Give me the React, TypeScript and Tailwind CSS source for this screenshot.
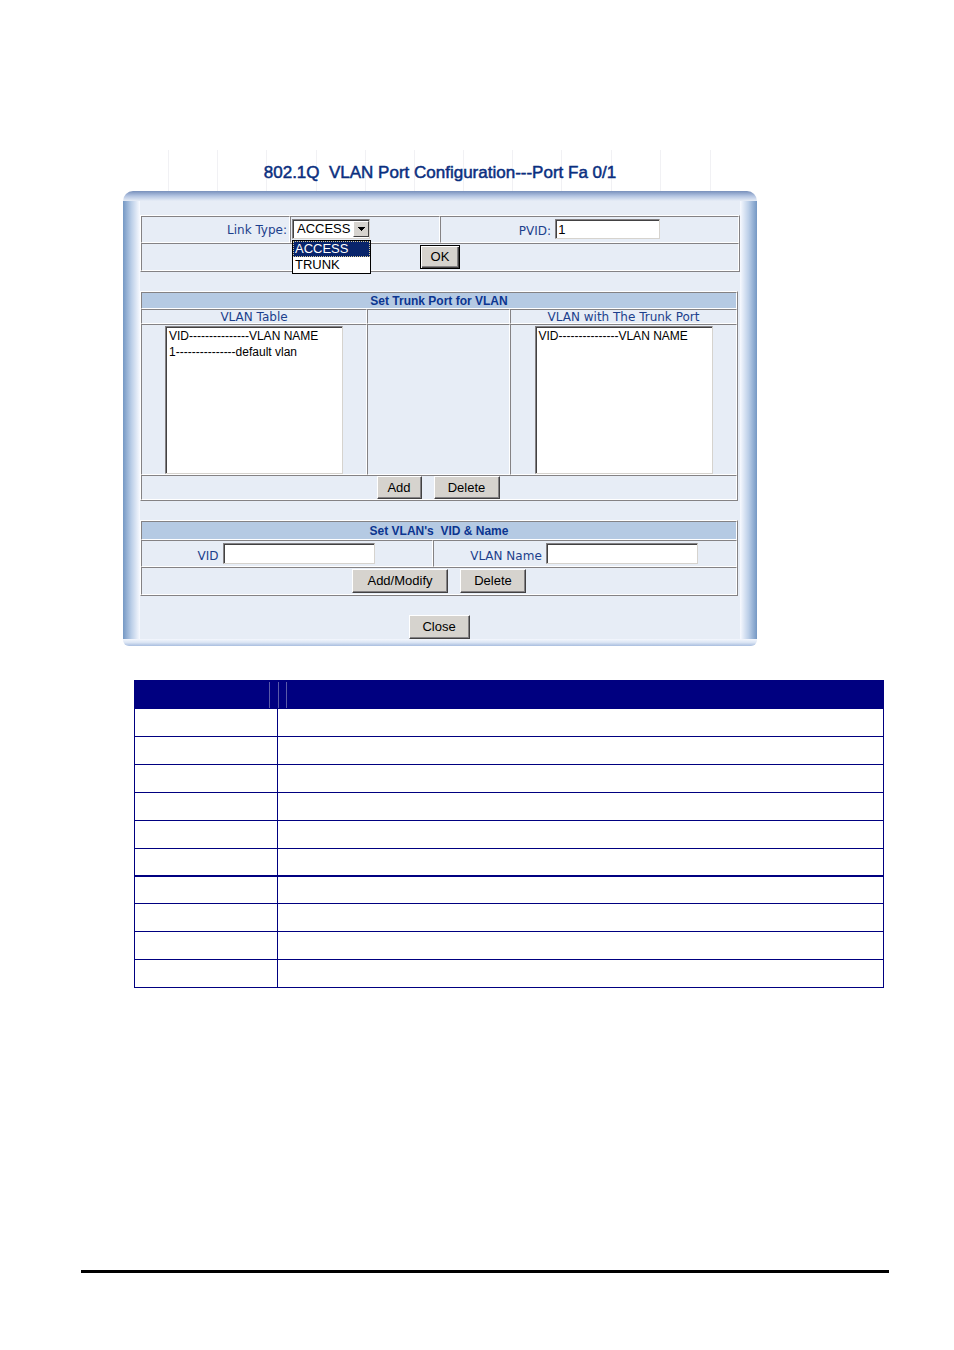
import React, { useState } from 'react';
import clsx from 'clsx';

const LINK_TYPES = ['ACCESS', 'TRUNK'];

const GUIDES = [1, 2, 3, 4, 5, 6, 7, 8, 9, 10, 11];

const FIELD_ROWS = [
  { id: 1 },
  { id: 2 },
  { id: 3 },
  { id: 4 },
  { id: 5 },
  { id: 6, divider: true },
  { id: 7 },
  { id: 8 },
  { id: 9 },
  { id: 10 },
];

const labelClass = 'font-["DejaVu_Sans",Verdana,sans-serif] text-xs text-[#1c3f8c]';

const sunkenClass =
  'border border-t-[#848284] border-l-[#848284] border-b-[#d6d3ce] border-r-[#d6d3ce] bg-white text-black shadow-[inset_1px_1px_0_#424142] outline-none';

const inputClass = 'px-0.5 text-[13px] leading-4';

interface BoxProps {
  className?: string;
  children?: React.ReactNode;
}

// Raised outer frame of an old style bordered table
const Frame: React.FC<BoxProps> = ({ className, children }) => (
  <div className={clsx('grid border border-t-white border-l-white border-b-[#848284] border-r-[#848284]', className)}>
    {children}
  </div>
);

const Cell: React.FC<BoxProps> = ({ className, children }) => (
  <div className={clsx('flex items-center border border-t-[#848284] border-l-[#848284] border-b-white border-r-white', className)}>
    {children}
  </div>
);

interface PushButtonProps {
  label: string;
  className?: string;
  isDefault?: boolean;
}

const PushButton: React.FC<PushButtonProps> = ({ label, className, isDefault }) => (
  <button
    type="button"
    className={clsx(
      'shrink-0 border bg-[#d6d3ce] text-[13px] leading-4 text-black',
      isDefault
        ? 'border-black shadow-[inset_1px_1px_0_#ffffff,inset_-1px_-1px_0_#424142,inset_-2px_-2px_0_#848284]'
        : 'border-t-white border-l-white border-b-[#424142] border-r-[#424142] shadow-[inset_-1px_-1px_0_#848284]',
      className
    )}
  >
    {label}
  </button>
);

interface VlanListProps {
  id: string;
  rows: string[];
}

const VlanList: React.FC<VlanListProps> = ({ id, rows }) => (
  <select
    id={id}
    size={9}
    className={clsx(sunkenClass, 'h-[148px] w-[178px] appearance-none overflow-hidden px-px pt-0.5 text-xs')}
  >
    {rows.map((row) => (
      <option key={row} className="h-4 px-0.5 py-0 leading-4">
        {row}
      </option>
    ))}
  </select>
);

const LinkTypeSelect: React.FC = () => {
  const [value, setValue] = useState('ACCESS');

  return (
    <div className="relative h-5 w-[78px]">
      <select
        id="link-type"
        value={value}
        onChange={(e) => setValue(e.target.value)}
        className={clsx(sunkenClass, 'block h-5 w-full appearance-none pl-1 text-[13px] leading-4')}
      >
        {LINK_TYPES.map((type) => (
          <option key={type}>{type}</option>
        ))}
      </select>
      <span className="pointer-events-none absolute top-0.5 right-px flex h-4 w-4 items-center justify-center border border-t-white border-l-white border-b-[#424142] border-r-[#424142] bg-[#d6d3ce]">
        <svg width="7" height="4" viewBox="0 0 7 4" shapeRendering="crispEdges">
          <path d="M0 0h7v1h-1v1h-1v1h-1v1h-1v-1h-1v-1h-1v-1h-1z" fill="#000" />
        </svg>
      </span>
      <ul
        role="listbox"
        aria-label="Link Type"
        className="absolute top-[21px] left-0 z-10 w-[79px] border border-black bg-white text-[13px] leading-4 text-black"
      >
        {LINK_TYPES.map((type) => (
          <li
            key={type}
            role="option"
            aria-selected={type === value}
            onClick={() => setValue(type)}
            className={clsx(
              'h-4 px-0.5',
              type === value && 'bg-[#08246b] text-white outline outline-dotted -outline-offset-1 outline-[#d6c894]'
            )}
          >
            {type}
          </li>
        ))}
      </ul>
    </div>
  );
};

const PortForm: React.FC = () => (
  <form className="w-full max-w-[634px]">
    {/* Title over faint guide lines */}
    <div className="relative flex h-[41px] items-center justify-center pt-1">
      <div className="absolute inset-y-0 right-[46px] left-[45px] grid grid-cols-11 divide-x divide-[#f1f1f4] border-x border-[#f1f1f4]">
        {GUIDES.map((guide) => (
          <span key={guide} />
        ))}
      </div>
      <h1 className="relative text-[17px] leading-5 whitespace-pre text-[#0b2f7f] [-webkit-text-stroke:0.5px_#0b2f7f]">
        802.1Q{'  '}VLAN Port Configuration---Port Fa 0/1
      </h1>
    </div>

    <div className="h-[10px] rounded-t-[10px] bg-linear-to-b from-[#7890bb] via-[#b4c5e2] to-[#e7edf6]" />
    <div className="flex bg-[#e7edf6]">
      <div className="w-[17px] shrink-0 bg-linear-to-r from-[#7598c4] via-[#bccfe8] to-[#f8faff]" />

      <div className="flex min-w-0 grow flex-col gap-[19px] pt-[14px]">
        <Frame className="grid-cols-[149fr_150fr_299fr] grid-rows-[27px_28px]">
          <Cell className="justify-end pr-0.5">
            <label htmlFor="link-type" className={labelClass}>Link Type:</label>
          </Cell>
          <Cell className="pb-px pl-px">
            <LinkTypeSelect />
          </Cell>
          <Cell className="justify-center gap-1 pb-px">
            <label htmlFor="pvid" className={clsx(labelClass, 'pt-1')}>PVID:</label>
            <input id="pvid" type="text" defaultValue="1" className={clsx(sunkenClass, inputClass, 'h-5 w-[105px]')} />
          </Cell>
          <Cell className="col-span-3 justify-center">
            <PushButton label="OK" isDefault className="h-6 w-10" />
          </Cell>
        </Frame>

        <Frame className="mr-0.5 grid-cols-[226fr_143fr_227fr] grid-rows-[17px_15px_151px_25px]">
          <Cell className="col-span-3 justify-center bg-[#b5cae3]">
            <h2 className="text-xs font-bold text-[#0b3590]">Set Trunk Port for VLAN</h2>
          </Cell>
          <Cell className="justify-center">
            <label htmlFor="vlan-table" className={labelClass}>VLAN Table</label>
          </Cell>
          <Cell />
          <Cell className="justify-center">
            <label htmlFor="trunk-vlans" className={labelClass}>VLAN with The Trunk Port</label>
          </Cell>
          <Cell className="justify-center">
            <VlanList id="vlan-table" rows={['VID---------------VLAN NAME', '1---------------default vlan']} />
          </Cell>
          <Cell />
          <Cell className="justify-center">
            <VlanList id="trunk-vlans" rows={['VID---------------VLAN NAME']} />
          </Cell>
          <Cell className="col-span-3 justify-center gap-3 pr-0.5">
            <PushButton label="Add" className="h-[23px] w-[45px]" />
            <PushButton label="Delete" className="h-[23px] w-[66px]" />
          </Cell>
        </Frame>

        <Frame className="mr-0.5 grid-cols-[292fr_304fr] grid-rows-[19px_27px_28px]">
          <Cell className="col-span-2 justify-center bg-[#b5cae3]">
            <h2 className="text-xs font-bold whitespace-pre text-[#0b3590]">Set VLAN's{'  '}VID &amp; Name</h2>
          </Cell>
          <Cell className="justify-center gap-1 pr-0.5">
            <label htmlFor="vid" className={clsx(labelClass, 'pt-1')}>VID</label>
            <input id="vid" type="text" className={clsx(sunkenClass, inputClass, 'h-[21px] w-[152px]')} />
          </Cell>
          <Cell className="justify-center gap-1 pr-0.5">
            <label htmlFor="vlan-name" className={clsx(labelClass, 'pt-1')}>VLAN Name</label>
            <input id="vlan-name" type="text" className={clsx(sunkenClass, inputClass, 'h-[21px] w-[152px]')} />
          </Cell>
          <Cell className="col-span-2 justify-center gap-3">
            <PushButton label="Add/Modify" className="h-6 w-24" />
            <PushButton label="Delete" className="h-6 w-[66px]" />
          </Cell>
        </Frame>

        <PushButton label="Close" className="mr-0.5 h-6 w-[61px] self-center" />
      </div>

      <div className="w-[17px] shrink-0 bg-linear-to-l from-[#7598c4] via-[#bccfe8] to-[#f8faff]" />
    </div>
    <div className="h-[7px] rounded-b-[6px] bg-linear-to-b from-[#f4f7fd] via-[#dbe5f4] to-[#a9bedf]" />
  </form>
);

const FieldTable: React.FC = () => (
  <table className="w-full table-fixed border-collapse border border-[#000080]">
    <colgroup>
      <col className="w-[143px]" />
      <col />
    </colgroup>
    <thead>
      <tr className="h-7 bg-[#000080]">
        <th className="p-0">
          <div className="mr-2 h-[26px] border-r border-[#5a5aa8]" />
        </th>
        <th className="p-0">
          <div className="h-[26px] w-[9px] border-x border-[#5a5aa8]" />
        </th>
      </tr>
    </thead>
    <tbody>
      {FIELD_ROWS.map((row) => (
        <tr key={row.id} className={clsx('border-[#000080]', row.divider ? 'h-[27px] border-b-2' : 'h-7 border-b')}>
          <td className="border-r border-[#000080] p-0" />
          <td className="p-0" />
        </tr>
      ))}
    </tbody>
  </table>
);

const App: React.FC = () => (
  <div className="flex min-h-screen flex-col bg-white pt-[150px] pr-[65px] pb-[77px] pl-[81px] font-['Liberation_Sans',Arial,sans-serif]">
    <main>
      <div className="pl-[42px]">
        <PortForm />
      </div>
      <div className="mt-[34px] pr-[5px] pl-[53px]">
        <FieldTable />
      </div>
    </main>
    <footer className="mt-auto border-t-[3px] border-black" />
  </div>
);

export default App;
